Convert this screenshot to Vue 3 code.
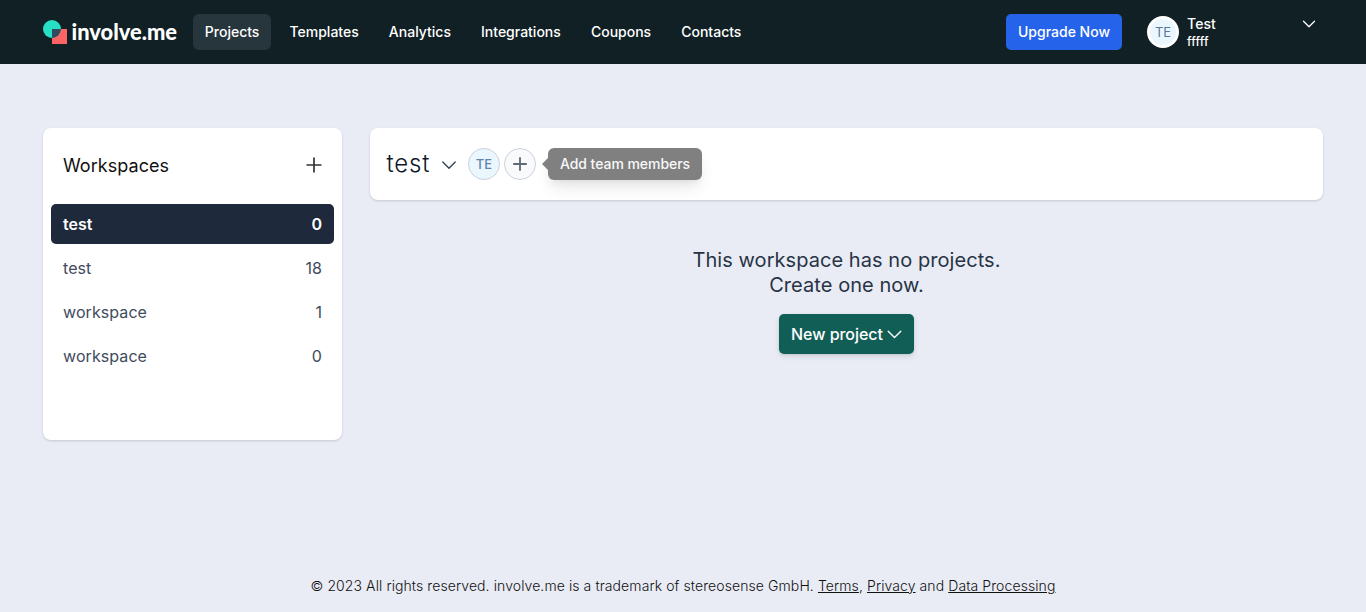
<script setup>
const navItems = ['Projects', 'Templates', 'Analytics', 'Integrations', 'Coupons', 'Contacts']
const workspaces = [
  { name: 'test', count: 0 },
  { name: 'test', count: 18 },
  { name: 'workspace', count: 1 },
  { name: 'workspace', count: 0 },
]
</script>

<template>
  <div class="page">
    <header class="topbar">
      <svg class="logo" width="136" height="32" viewBox="0 0 136 32">
        <rect x="9" y="14" width="15" height="15" fill="#ff6464" />
        <circle cx="9" cy="14" r="9" fill="#27dfc5" />
        <path d="M9 14h9a9 9 0 0 1-9 9z" fill="#304b5e" />
        <text x="28.5" y="25" textLength="105.5" lengthAdjust="spacingAndGlyphs">involve.me</text>
      </svg>
      <nav class="nav">
        <a v-for="(item, i) in navItems" :key="item" :class="['nav-item', { active: i === 0 }]">{{ item }}</a>
      </nav>
      <button class="upgrade">Upgrade Now</button>
      <div class="account">
        <span class="avatar avatar-top">TE</span>
        <div class="who">
          <div class="who-name">Test</div>
          <div class="who-org">fffff</div>
        </div>
        <svg class="account-chevron" width="14" height="8" viewBox="0 0 14 8"><path d="M1.5 1.2 7 6.7l5.5-5.5" /></svg>
      </div>
    </header>

    <main class="content">
      <aside class="card sidebar">
        <div class="side-head">
          <span>Workspaces</span>
          <svg width="16" height="16" viewBox="0 0 16 16"><path d="M8 .5v15M.5 8h15" /></svg>
        </div>
        <ul class="list">
          <li v-for="(w, i) in workspaces" :key="i" :class="['row', { selected: i === 0 }]">
            <span>{{ w.name }}</span><span>{{ w.count }}</span>
          </li>
        </ul>
      </aside>

      <section class="main">
        <div class="card title-card">
          <h1>test</h1>
          <svg class="title-chevron" width="16" height="10" viewBox="0 0 16 10"><path d="M1.8 2 8 8.2 14.2 2" /></svg>
          <span class="avatar member">TE</span>
          <button class="avatar add">
            <svg width="14" height="14" viewBox="0 0 14 14"><path d="M7 .9v12.2M.9 7h12.2" /></svg>
          </button>
          <div class="tooltip">Add team members</div>
        </div>
        <div class="empty">
          <p>This workspace has no projects.<br />Create one now.</p>
          <button class="new-project">
            <span>New project</span>
            <svg width="15" height="9" viewBox="0 0 15 9"><path d="M1.2 1.3 7.5 7.6l6.3-6.3" /></svg>
          </button>
        </div>
      </section>
    </main>

    <footer class="footer">
      © 2023 All rights reserved. involve.me is a trademark of stereosense GmbH. <a>Terms</a>, <a>Privacy</a> and <a>Data Processing</a>
    </footer>
  </div>
</template>

<style>
body { margin: 0; }
</style>

<style scoped>
* { box-sizing: border-box; }
.page {
  height: 612px;
  display: flex;
  flex-direction: column;
  background: #e9ecf5;
  font-family: Inter, "Liberation Sans", sans-serif;
  overflow: hidden;
}
button { font-family: inherit; border: 0; padding: 0; }
svg { display: block; flex: none; }
svg path { stroke-linecap: round; stroke-linejoin: round; }
.topbar {
  height: 64px;
  flex: none;
  display: flex;
  align-items: center;
  padding: 0 43px;
  background: #112024;
  color: #fff;
}
.logo { margin: -2px 14px 0 0; }
.logo text { font: 900 22px Lato, sans-serif; fill: #fff; }
.nav { display: flex; gap: 6.5px; }
.nav-item {
  height: 36px;
  padding: 0 11.8px;
  border-radius: 6px;
  font-size: 14px;
  font-weight: 500;
  line-height: 36px;
}
.nav-item.active { background: #27363d; }
.upgrade {
  width: 116px;
  height: 36px;
  margin-left: auto;
  padding-bottom: 2px;
  border-radius: 5px;
  background: #2563eb;
  color: #fff;
  font-size: 14px;
  font-weight: 500;
}
.account { width: 176px; height: 36px; margin-left: 25px; display: flex; align-items: center; }
.avatar {
  width: 32px;
  height: 32px;
  flex: none;
  display: flex;
  align-items: center;
  justify-content: center;
  border-radius: 50%;
  background: #eaf7ff;
  color: #5a7699;
  font-size: 13px;
}
.avatar-top { border: 3px solid #fff; }
.who { margin-left: 8px; }
.who-name { font-size: 14px; line-height: 18px; font-weight: 500; letter-spacing: .1px; }
.who-org { font-size: 12px; line-height: 16px; font-weight: 500; letter-spacing: .2px; position: relative; top: 1px; }
.account-chevron { margin: -17px 7px 0 auto; fill: none; stroke: #fff; stroke-width: 1.3; }
.content { display: flex; align-items: flex-start; gap: 28px; padding: 64px 43px 0; }
.card { background: #fff; border-radius: 8px; box-shadow: 0 1px 3px rgba(0, 0, 0, .1), 0 1px 2px rgba(0, 0, 0, .06); }
.sidebar { width: 299px; height: 312px; flex: none; padding: 0 8px; }
.side-head {
  height: 76px;
  display: flex;
  align-items: center;
  justify-content: space-between;
  padding: 0 12px 2px;
  font-size: 18px;
  letter-spacing: .05px;
  color: #111;
}
.side-head svg { fill: none; stroke: #333; stroke-width: 1.7; }
.side-head path { stroke-linecap: butt; }
.list { margin: 0; padding: 0; list-style: none; display: flex; flex-direction: column; gap: 4px; }
.row {
  height: 40px;
  display: flex;
  align-items: center;
  justify-content: space-between;
  padding: 0 12px;
  border-radius: 5px;
  font-size: 16px;
  letter-spacing: .08px;
  color: #414b5d;
}
.row.selected { background: #1e293b; color: #fff; font-weight: 600; letter-spacing: 0; }
.main { flex: 1; }
.title-card { height: 72px; display: flex; align-items: center; padding: 0 16px; }
h1 { margin: -2px 0 0; padding-left: .5px; font-size: 24px; font-weight: 300; letter-spacing: .8px; width: 43.5px; white-space: nowrap; color: #111827; }
.title-chevron { margin: 2px 11px 0 11.5px; fill: none; stroke: #334155; stroke-width: 1.4; }
.member, .add { border: 1px solid #ced1dc; }
.member { font-weight: 500; color: #6284ab; }
.add { margin-left: 4px; background: #f8fafc; }
.add svg { fill: none; stroke: #5f6877; stroke-width: 1.8; }
.tooltip {
  position: relative;
  width: 154px;
  height: 32px;
  margin-left: 12px;
  border-radius: 6px;
  background: #808080;
  color: #f8f8f8;
  font-size: 14px;
  font-weight: 500;
  letter-spacing: -.04px;
  line-height: 32px;
  text-align: center;
  box-shadow: 0 10px 15px -3px rgba(0, 0, 0, .1), 0 4px 6px -2px rgba(0, 0, 0, .05);
}
.tooltip::before {
  content: "";
  position: absolute;
  left: -6px;
  top: 10px;
  border: solid transparent;
  border-width: 6px 6px 6px 0;
  border-right-color: #808080;
}
.empty { padding-top: 48px; display: flex; flex-direction: column; align-items: center; }
.empty p { margin: 0; text-align: center; font-size: 20px; line-height: 25px; letter-spacing: .06px; color: #283445; }
.new-project {
  width: 135px;
  height: 40px;
  margin-top: 16px;
  display: flex;
  align-items: center;
  justify-content: center;
  gap: 4px;
  border-radius: 5px;
  background: #115e56;
  color: #fff;
  font-size: 16px;
  font-weight: 500;
  letter-spacing: -.04px;
  box-shadow: 0 1px 3px rgba(0, 0, 0, .1), 0 3px 6px rgba(0, 0, 0, .08);
}
.new-project svg { fill: none; stroke: #fff; stroke-width: 1.4; }
.footer {
  margin-top: auto;
  padding-bottom: 16px;
  text-align: center;
  font-size: 14px;
  line-height: 20px;
  font-weight: 300;
  letter-spacing: .09px;
  color: #111;
}
.footer a { text-decoration: underline; }
</style>
